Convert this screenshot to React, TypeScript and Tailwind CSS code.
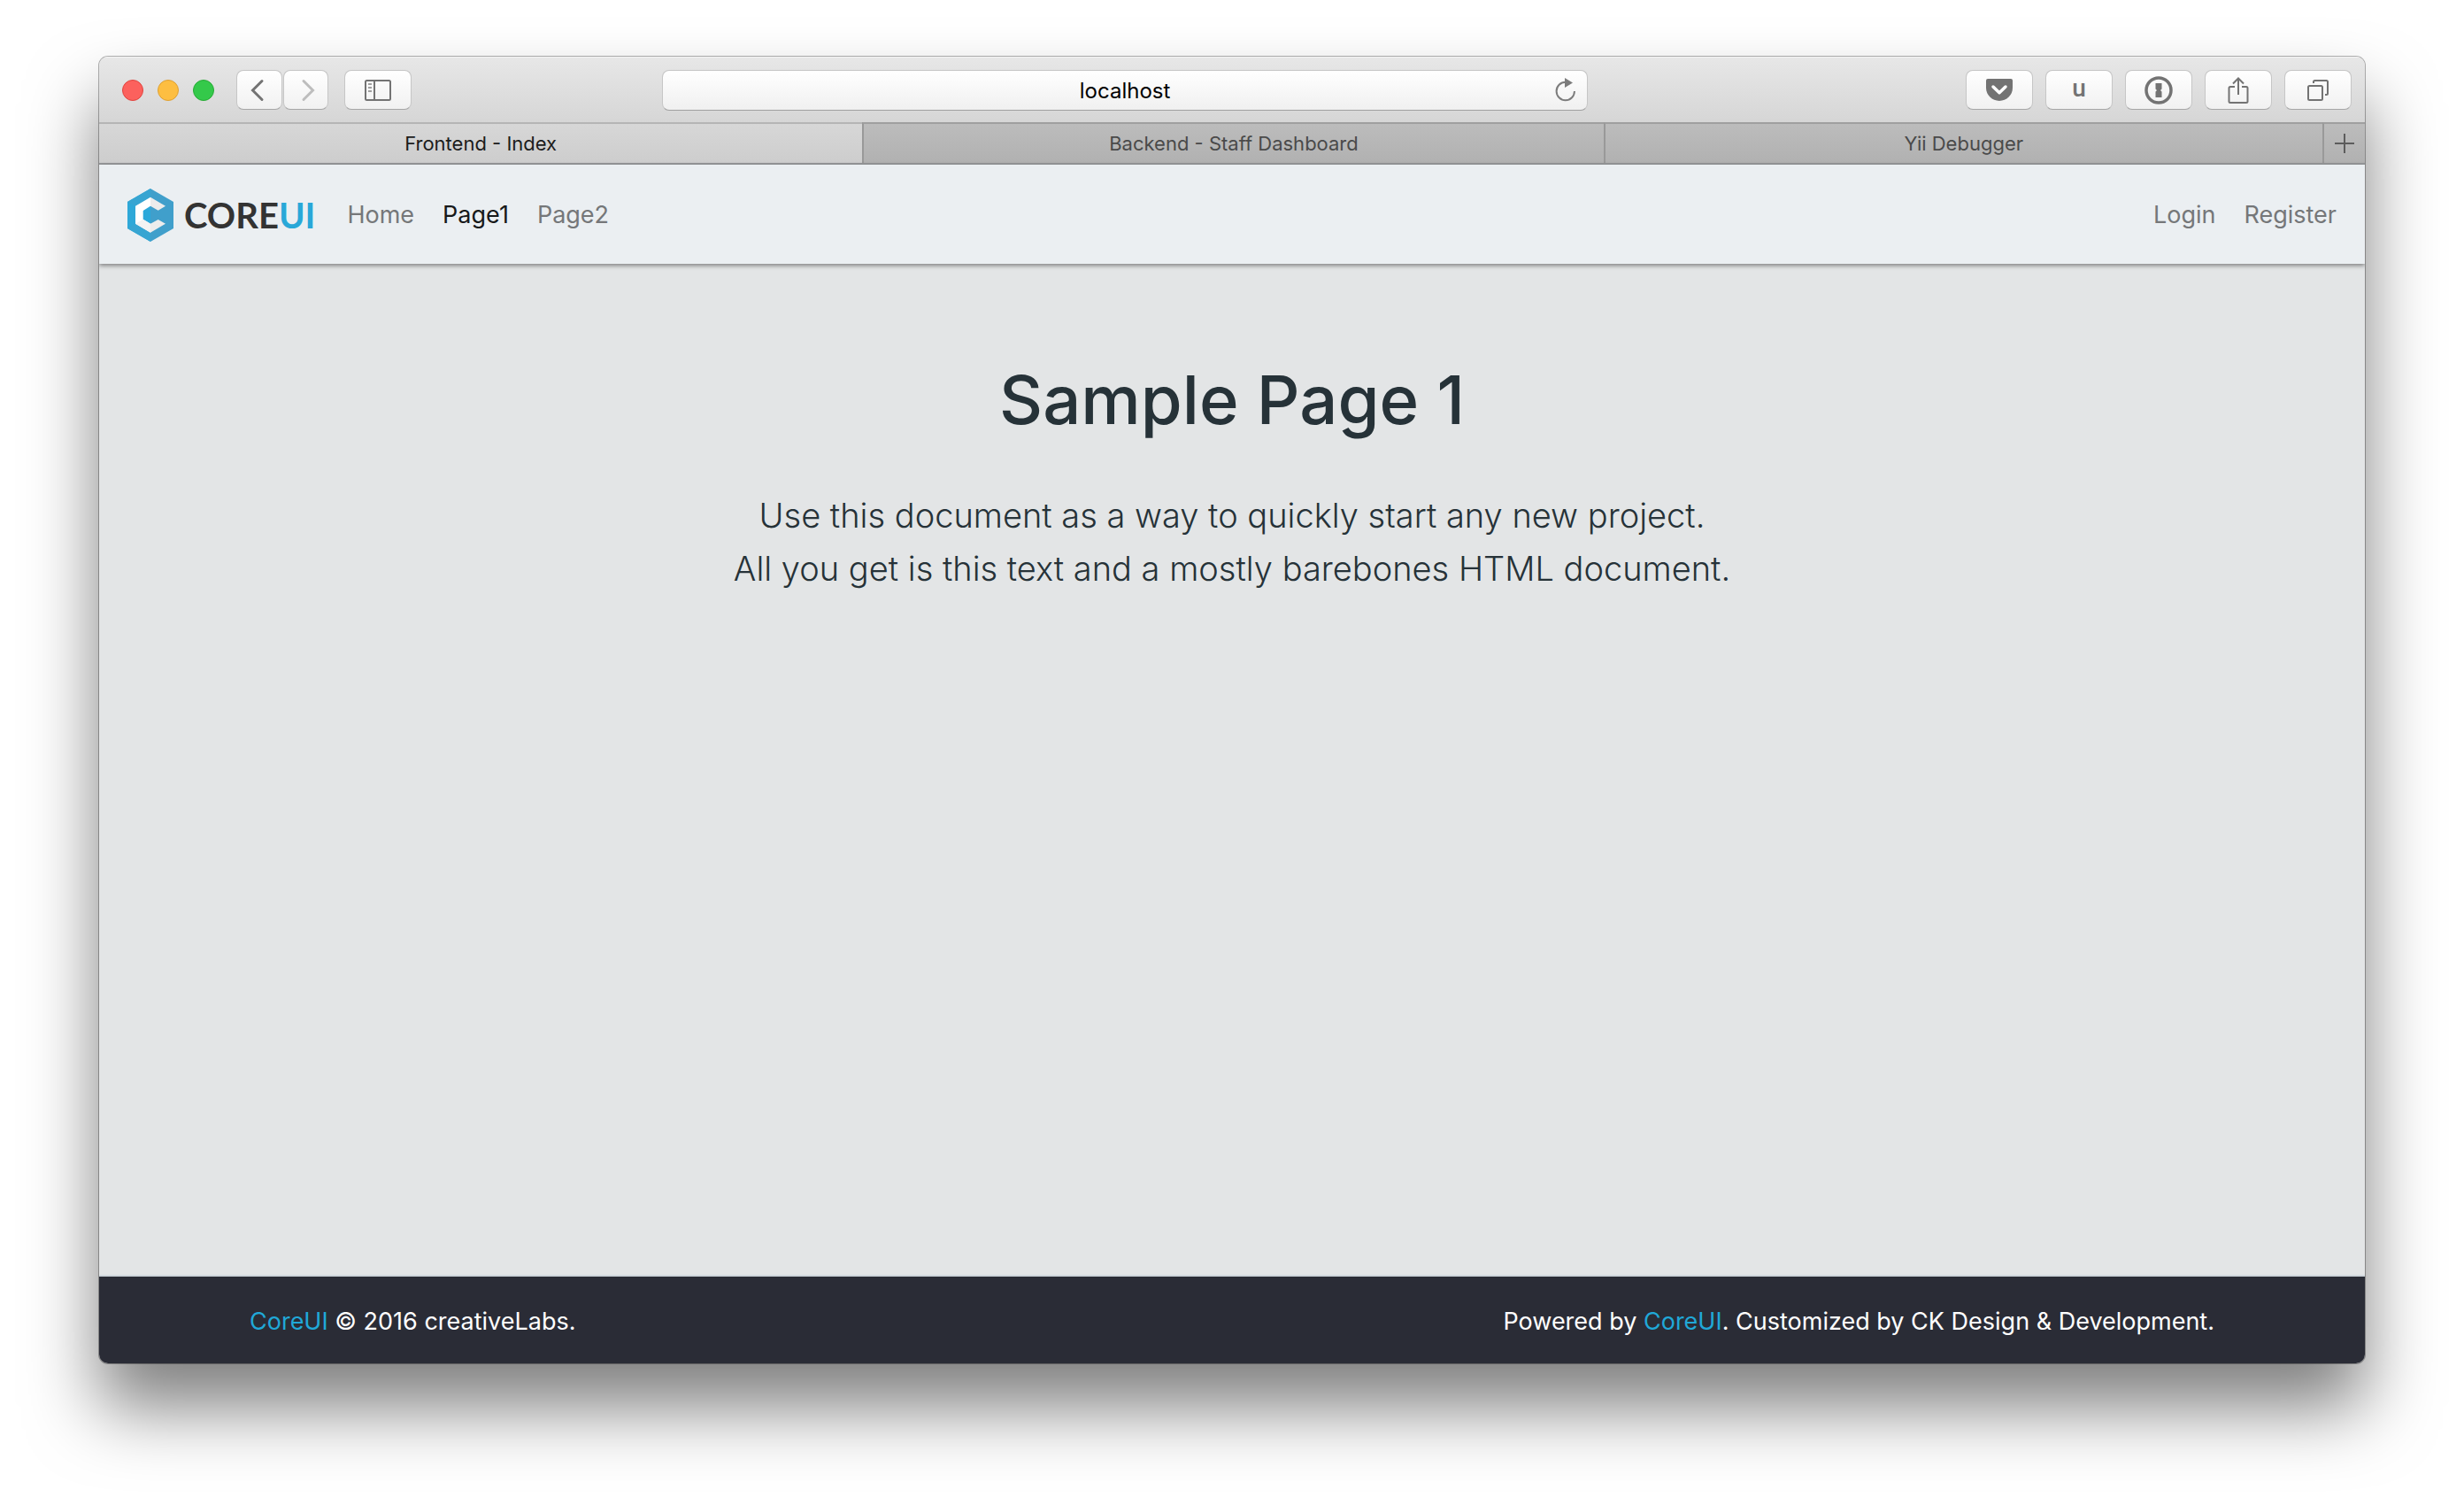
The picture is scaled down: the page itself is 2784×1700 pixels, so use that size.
import type { ReactNode } from "react";

const buttonFace =
  "flex h-[45px] items-center justify-center rounded-lg border border-[#c6c6c6] border-b-[#a6a6a6] bg-linear-to-b from-white to-[#f1f1f1] text-[#737373]";

function ToolButton({ label, children }: { label: string; children: ReactNode }) {
  return (
    <button type="button" aria-label={label} className={`${buttonFace} w-[76px]`}>
      {children}
    </button>
  );
}

function BackIcon() {
  return (
    <svg width="16" height="26" viewBox="0 0 16 26" fill="none" stroke="currentColor" strokeWidth="3" strokeLinecap="round">
      <path d="M13 2.5 2.5 13 13 23.5" />
    </svg>
  );
}

function ForwardIcon() {
  return (
    <svg width="16" height="26" viewBox="0 0 16 26" fill="none" stroke="currentColor" strokeWidth="3" strokeLinecap="round">
      <path d="M3 2.5 13.5 13 3 23.5" />
    </svg>
  );
}

function SidebarIcon() {
  return (
    <svg width="30" height="24" viewBox="0 0 30 24" fill="none" stroke="currentColor" strokeWidth="2">
      <rect x="1" y="1" width="28" height="22" rx="1.5" />
      <path d="M11 1v22" />
      <path d="M4 5h4M4 9h4M4 13h4" stroke="#a0a0a0" />
    </svg>
  );
}

function ReloadIcon() {
  return (
    <svg width="24" height="28" viewBox="0 0 24 28" fill="none" stroke="currentColor" strokeWidth="2">
      <path d="M22 15a10.2 10.2 0 1 1-10.2-10.2" />
      <path d="M11 0v11l9-5.500z" fill="currentColor" stroke="none" />
    </svg>
  );
}

function PocketIcon() {
  return (
    <svg width="30" height="25" viewBox="0 0 30 25" fill="none">
      <path d="M2 0h26a2 2 0 0 1 2 2v8a15 15 0 0 1-30 0V2a2 2 0 0 1 2-2z" fill="currentColor" />
      <path d="M8 9l7 6.700L22 9" stroke="#fff" strokeWidth="3.500" strokeLinecap="round" strokeLinejoin="round" />
    </svg>
  );
}

function KeyholeIcon() {
  return (
    <svg width="32" height="32" viewBox="0 0 32 32" fill="none">
      <circle cx="16" cy="16" r="14" stroke="currentColor" strokeWidth="3.500" />
      <path d="M12.500 8h7v6.500l-1.500 1.500 1.500 1.500V24h-7v-6.500l1.500-1.500-1.500-1.500z" fill="currentColor" />
    </svg>
  );
}

function ShareIcon() {
  return (
    <svg width="24" height="30" viewBox="0 0 24 30" fill="none" stroke="currentColor" strokeWidth="2">
      <path d="M8 11H3a1.500 1.500 0 0 0-1.500 1.500v15A1.500 1.500 0 0 0 3 29h18a1.500 1.500 0 0 0 1.500-1.500v-15A1.500 1.500 0 0 0 21 11h-5" />
      <path d="M12 20V2M6 7.500 12 1.500l6 6" />
    </svg>
  );
}

function TabsIcon() {
  return (
    <svg width="24" height="24" viewBox="0 0 24 24" fill="none" stroke="currentColor" strokeWidth="2">
      <rect x="1" y="7" width="16" height="16" rx="1.500" />
      <path d="M7 4V2.500A1.500 1.500 0 0 1 8.500 1h13A1.500 1.500 0 0 1 23 2.500v13a1.500 1.500 0 0 1-1.500 1.500H20" />
    </svg>
  );
}

function Toolbar() {
  return (
    <div className="flex h-[74px] items-center border-t border-[#f4f4f4] bg-linear-to-b from-[#e7e7e7] to-[#d6d6d6] pr-[15px] pl-[26px]">
      <div className="flex flex-[610] items-center">
        <div className="flex gap-4">
          <button type="button" aria-label="Close" className="size-6 rounded-full border border-[#e0443e] bg-[#fc615d]" />
          <button type="button" aria-label="Minimize" className="size-6 rounded-full border border-[#dea033] bg-[#fdbe41]" />
          <button type="button" aria-label="Zoom" className="size-6 rounded-full border border-[#27aa35] bg-[#34c94a]" />
        </div>
        <div className="ml-[25px] flex gap-px">
          <button type="button" aria-label="Back" className={`${buttonFace} w-[52px] pr-1`}>
            <BackIcon />
          </button>
          <button type="button" aria-label="Forward" disabled className={`${buttonFace} w-[51px] pl-1`}>
            <span className="text-[#bdbdbd]">
              <ForwardIcon />
            </span>
          </button>
        </div>
        <div className="ml-[18px]">
          <ToolButton label="Show sidebar">
            <SidebarIcon />
          </ToolButton>
        </div>
      </div>
      <div className="flex-[1047]">
        <div className="flex h-[46px] items-center rounded-lg border border-[#c6c6c6] border-b-[#a0a0a0] bg-linear-to-b from-white to-[#f0f0f0] pr-3 pl-9">
          <input
            aria-label="Address"
            defaultValue="localhost"
            className="min-w-0 flex-1 bg-transparent pt-0.5 text-center text-[24px] leading-8 text-black outline-none"
          />
          <button type="button" aria-label="Reload" className="text-[#7c7c7c]">
            <ReloadIcon />
          </button>
        </div>
      </div>
      <div className="flex flex-[863] justify-end gap-3.5">
        <ToolButton label="Save to Pocket">
          <PocketIcon />
        </ToolButton>
        <ToolButton label="uBlock">
          <span className="pb-1 font-['Roboto'] text-[28px] leading-7 font-medium">u</span>
        </ToolButton>
        <ToolButton label="Passwords">
          <KeyholeIcon />
        </ToolButton>
        <ToolButton label="Share">
          <ShareIcon />
        </ToolButton>
        <ToolButton label="Show all tabs">
          <TabsIcon />
        </ToolButton>
      </div>
    </div>
  );
}

const idleTab =
  "border-t-2 border-l-2 border-t-[#9f9f9f] border-l-[#999999] bg-linear-to-b from-[#bcbcbc] to-[#b1b1b1] text-[#4a4a4a]";

function TabBar() {
  return (
    <div className="flex h-12 border-b-2 border-[#989a9c] text-[22px] leading-7">
      <button type="button" className="flex-[863] border-t-2 border-[#b5b5b5] bg-linear-to-b from-[#d7d7d7] to-[#cdcdcd] text-[#1c1c1c]">
        Frontend - Index
      </button>
      <button type="button" className={`${idleTab} flex-[836]`}>
        Backend - Staff Dashboard
      </button>
      <button type="button" className={`${idleTab} flex-[811]`}>
        Yii Debugger
      </button>
      <button type="button" aria-label="New tab" className={`${idleTab} flex w-12 items-center justify-center`}>
        <svg width="22" height="22" viewBox="0 0 22 22" stroke="#5c5c5c" strokeWidth="2">
          <path d="M11 0v22M0 11h22" />
        </svg>
      </button>
    </div>
  );
}

function Logo() {
  return (
    <a href="#" aria-label="CoreUI" className="flex items-center gap-3">
      <svg width="52" height="60" viewBox="0 0 52 60">
        <path d="M26 0 0 15v30l26 15z" fill="#2ea8d8" />
        <path d="M26 0 0 15l9 5L26 9.700z" fill="#37a5d2" />
        <path d="M26 60 0 45l9-5.300 17 10z" fill="#37a5d2" />
        <path d="M26 0l26 15v30L26 60z" fill="#409fcb" />
        <path d="M26 19.700 17.700 25v9.700l8.300 5z" fill="#2ba8da" />
        <path d="M26 9.700 9 19.700v20l17 10v-10l-8.300-5V25l8.300-5.300z" fill="#fff" />
        <path d="M9 39.700l8.700-5 8.300 5v10z" fill="#f3f3f3" />
        <path d="M26 9.700l17 10-8.300 5-8.700-5zM26 49.700l17-10-8.300-4.700-8.700 4.700z" fill="#ececec" />
      </svg>
      <span className="font-['Lato'] text-[40px] leading-[60px] font-bold text-[#333333]">
        CORE<span className="text-[#29a8d8]">UI</span>
      </span>
    </a>
  );
}

function SiteHeader() {
  return (
    <header className="relative flex h-28 items-center bg-[#ebeff2] px-8 pt-0.5 text-[27px] leading-10 text-[#757779] shadow-[0_2px_5px_rgba(0,0,0,0.45)]">
      <Logo />
      <nav aria-label="Main" className="ml-9 flex flex-1 gap-8">
        <a href="#">Home</a>
        <a href="#" aria-current="page" className="text-[#17191a]">
          Page1
        </a>
        <a href="#">Page2</a>
      </nav>
      <nav aria-label="Account" className="flex gap-8">
        <a href="#">Login</a>
        <a href="#">Register</a>
      </nav>
    </header>
  );
}

export default function App() {
  return (
    <div className="flex min-h-screen flex-col bg-white px-28 pt-16 pb-40 font-['Inter',sans-serif]">
      <div className="flex flex-1 flex-col rounded-[10px] shadow-[0_0_0_1px_rgba(0,0,0,0.3),0_50px_80px_rgba(0,0,0,0.5)]">
        <div className="flex flex-1 flex-col overflow-hidden rounded-[10px]">
          <Toolbar />
          <TabBar />
          <SiteHeader />
          <main className="flex-1 bg-[#e3e5e6] pt-[105px] text-center text-[#263238]">
            <h1 className="text-[76px] leading-[96px] font-medium">Sample Page 1</h1>
            <p className="mt-[53px] text-[38px] leading-[60px] font-light">
              Use this document as a way to quickly start any new project.
              <br />
              All you get is this text and a mostly barebones HTML document.
            </p>
          </main>
          <footer className="flex h-[100px] items-center justify-between border-t-2 border-[#cfd6dc] bg-[#2a2c36] px-[170px] pt-1 text-[27px] leading-10 text-white">
            <p>
              <a href="#" className="text-[#20a8d8]">CoreUI</a> © 2016 creativeLabs.
            </p>
            <p>
              Powered by <a href="#" className="text-[#20a8d8]">CoreUI</a>. Customized by CK Design &amp; Development.
            </p>
          </footer>
        </div>
      </div>
    </div>
  );
}
